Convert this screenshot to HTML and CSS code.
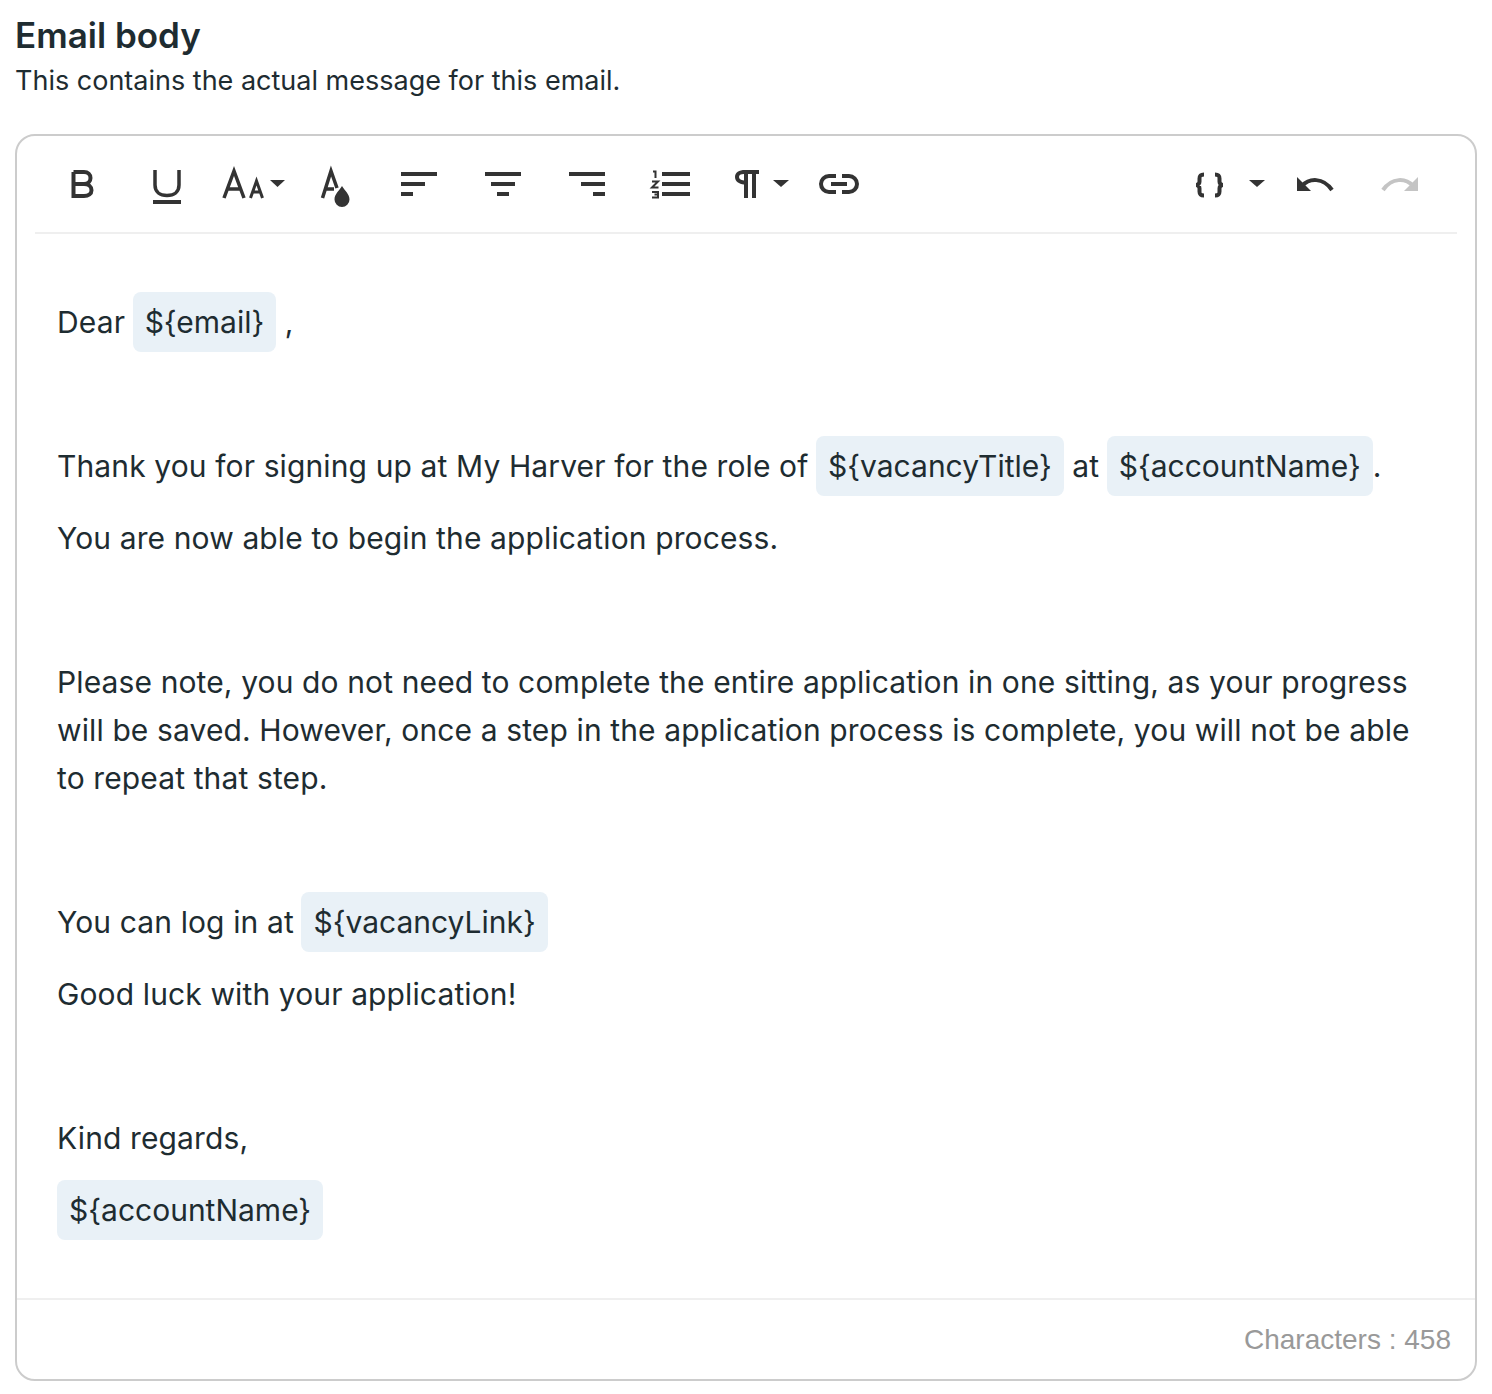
FILE: index.html
```html
<!DOCTYPE html>
<html>
<head>
  <title>Email body</title>
  <link rel="stylesheet" href="styles.css">
</head>
<body>
  <h1>Email body</h1>
  <p class="subtitle">This contains the actual message for this email.</p>

  <div class="editor">
    <div class="toolbar">
      <div class="tool-group">
        <button class="tool" type="button" aria-label="Bold">
          <svg viewBox="0 0 84 48"><path class="line" d="M32.5 12H43c4 0 6.500 2.500 6.500 6s-2.500 6-6.500 6H32.500M43 24c4.500 0 7.500 2.500 7.500 6.200S47.500 36 43 36H32.500V12"/></svg>
        </button>
        <button class="tool" type="button" aria-label="Underline">
          <svg viewBox="0 0 84 48"><path class="line thin" d="M30 10v15c0 7 5 10.500 12 10.500S54 32 54 25V10"/><rect x="28" y="40" width="28" height="4"/></svg>
        </button>
        <button class="tool" type="button" aria-label="Font size">
          <svg viewBox="0 0 84 48"><path class="line thin" d="M15 38 25 11 35 38M18.500 29h13"/><path class="line small" d="M41.500 38 47.500 21 53.500 38M43.500 32h8"/><path d="M61 20h15l-7.500 7z"/></svg>
        </button>
        <button class="tool" type="button" aria-label="Text color">
          <svg viewBox="0 0 84 48"><path class="line thin" d="M29.500 38 38 11l6 17M33 29h8"/><path d="M49 26c3 5 7.500 8 7.500 13.500a7.500 7.500 0 0 1-15 0C41.500 34 46 31 49 26z"/></svg>
        </button>
        <button class="tool" type="button" aria-label="Align left">
          <svg viewBox="0 0 84 48"><rect x="24" y="12" width="36" height="4"/><rect x="24" y="22" width="24" height="4"/><rect x="24" y="32" width="12" height="4"/></svg>
        </button>
        <button class="tool" type="button" aria-label="Align center">
          <svg viewBox="0 0 84 48"><rect x="24" y="12" width="36" height="4"/><rect x="30" y="22" width="24" height="4"/><rect x="36" y="32" width="12" height="4"/></svg>
        </button>
        <button class="tool" type="button" aria-label="Align right">
          <svg viewBox="0 0 84 48"><rect x="24" y="12" width="36" height="4"/><rect x="36" y="22" width="24" height="4"/><rect x="48" y="32" width="12" height="4"/></svg>
        </button>
        <button class="tool" type="button" aria-label="Ordered list">
          <svg viewBox="0 0 84 48"><rect x="33" y="12" width="28" height="4"/><rect x="33" y="22" width="28" height="4"/><rect x="33" y="32" width="28" height="4"/><path class="digit" d="M24 11.500h2.500V18M23 21.500h6l-6 6h6.500M23 32h6v5.500h-6M25.500 34.500H29"/></svg>
        </button>
        <button class="tool" type="button" aria-label="Paragraph format">
          <svg viewBox="0 0 84 48"><path d="M46 10v4h-3v24h-4V14h-4v24h-4V24.500C26 24 22 21.500 22 17c0-4.500 4-7 10-7zM31 14c-3.500 0-5 1-5 3s1.500 3 5 3.500z"/><path d="M60 20h16l-8 7z"/></svg>
        </button>
        <button class="tool" type="button" aria-label="Insert link">
          <svg viewBox="0 0 84 48"><path class="line" d="M39 16h-7a8 8 0 0 0 0 16h7M45 16h7a8 8 0 0 1 0 16h-7M34 24h16"/></svg>
        </button>
      </div>
      <div class="tool-group">
        <button class="tool wide" type="button" aria-label="Insert variable">
          <svg viewBox="0 0 106 48"><path class="line" d="M37 14.500c-4 0-4.500 1.500-4.500 4v3c0 2-1 3-3 3.500 2 .5 3 1.500 3 3.500v3c0 2.500.5 4 4.500 4M48 14.500c4 0 4.500 1.500 4.500 4v3c0 2 1 3 3 3.500-2 .5-3 1.500-3 3.500v3c0 2.500-.5 4-4.500 4"/><path d="M82 20h16l-8 7z"/></svg>
        </button>
        <button class="tool" type="button" aria-label="Undo">
          <svg viewBox="0 0 84 48"><path d="M24 17v14h14z"/><path class="line" d="M29 26c7-8 21-9 30 4"/></svg>
        </button>
        <button class="tool muted" type="button" aria-label="Redo">
          <svg viewBox="0 0 84 48"><path d="M61 17v14H47z"/><path class="line" d="M56 26c-7-8-21-9-30 4"/></svg>
        </button>
      </div>
    </div>

    <div class="content">
      <p>Dear <span class="tag">${email}</span> ,</p>
      <p>&nbsp;</p>
      <p>Thank you for signing up at My Harver for the role of <span class="tag">${vacancyTitle}</span> at <span class="tag">${accountName}</span>.</p>
      <p>You are now able to begin the application process.</p>
      <p>&nbsp;</p>
      <p>Please note, you do not need to complete the entire application in one sitting, as your progress will be saved. However, once a step in the application process is complete, you will not be able to repeat that step.</p>
      <p>&nbsp;</p>
      <p>You can log in at <span class="tag">${vacancyLink}</span></p>
      <p>Good luck with your application!</p>
      <p>&nbsp;</p>
      <p>Kind regards,</p>
      <p class="last"><span class="tag">${accountName}</span></p>
    </div>

    <div class="footer">Characters : 458</div>
  </div>
</body>
</html>
```

FILE: styles.css
```css
body {
  margin: 0;
  padding: 0 15px;
  font-family: Inter, sans-serif;
  color: #1e2c31;
  background-color: #fff;
}

h1 {
  margin: 0 0 2px;
  padding-top: 13px;
  font-size: 35px;
  line-height: 44px;
  font-weight: 600;
}

.subtitle {
  margin: 0 0 31px;
  font-size: 27px;
  line-height: 44px;
}

.editor {
  border: 2px solid #ccc;
  border-radius: 20px;
  height: 1247px;
  box-sizing: border-box;
  display: flex;
  flex-direction: column;
}

.toolbar {
  display: flex;
  justify-content: space-between;
  margin: 0 18px;
  padding: 24px 16px 24px 6px;
  border-bottom: 2px solid #efefef;
}

.tool-group {
  display: flex;
}

.tool {
  width: 84px;
  height: 48px;
  padding: 0;
  border: none;
  background: none;
  fill: #333;
}

.tool.wide {
  width: 106px;
}

.tool.muted {
  fill: #c4c4c4;
}

.tool.muted .line {
  stroke: #c4c4c4;
}

.tool svg {
  display: block;
  width: 100%;
  height: 100%;
}

.line {
  fill: none;
  stroke: #333;
  stroke-width: 4;
}

.line.thin {
  stroke-width: 3.500;
}

.line.small {
  stroke-width: 3;
}

.digit {
  fill: none;
  stroke: #333;
  stroke-width: 2;
}

.content {
  flex: 1;
  padding: 64px 40px 0;
  font-size: 30px;
  line-height: 48px;
  letter-spacing: 0.12px;
}

.content p {
  margin: 0 0 24px;
}

.tag {
  margin-left: -1px;
  padding: 12px;
  border-radius: 8px;
  background-color: #e9f1f7;
  letter-spacing: 0;
}

.last .tag {
  margin-left: 0;
}

.footer {
  height: 79px;
  padding-right: 24px;
  border-top: 2px solid #efefef;
  font-family: "Liberation Sans", sans-serif;
  font-size: 28px;
  line-height: 80px;
  text-align: right;
  color: #999;
}
```
